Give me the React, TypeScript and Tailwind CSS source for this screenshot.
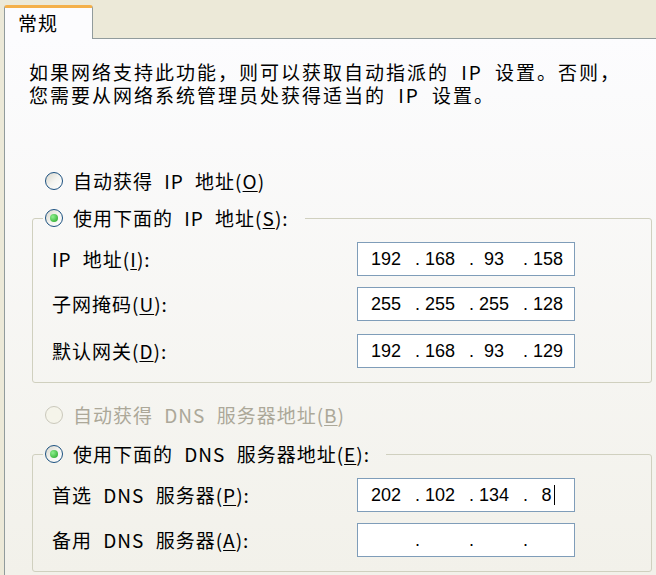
import React from 'react';

const cjk = "font-['Noto_Sans_CJK_SC',sans-serif]";

function Radio({ checked, disabled }: { checked?: boolean; disabled?: boolean }) {
  return (
    <span
      className={`flex h-[18px] w-[18px] shrink-0 items-center justify-center rounded-full border ${
        disabled
          ? 'border-[#cac8bb] bg-[#f5f4ea]'
          : 'border-[#1c5180] bg-gradient-to-br from-[#d8d6cc] via-[#f4f4f0] to-white'
      }`}
    >
      {checked && (
        <span className="h-[8px] w-[8px] rounded-full bg-[radial-gradient(circle_at_35%_35%,#8ef08e,#21a121)]" />
      )}
    </span>
  );
}

function Key({ k }: { k: string }) {
  return (
    <>
      (<span className="underline underline-offset-2">{k}</span>)
    </>
  );
}

function IpBox({ parts, caret }: { parts: string[]; caret?: boolean }) {
  return (
    <div className="flex h-[34px] w-[218px] items-center border border-[#7f9db9] bg-white pl-[1px] font-['Liberation_Sans',sans-serif] text-[18px] tracking-normal text-black">
      {parts.map((p, i) => (
        <div key={i} className="flex w-[54px] items-center">
          <span className="w-[10px] pl-[2px]">{i > 0 ? '.' : ''}</span>
          <span className="flex w-[34px] items-center justify-center">
            {p}
            {caret && i === parts.length - 1 && (
              <span className="ml-[2px] inline-block h-[20px] w-px bg-black" />
            )}
          </span>
          <span className="w-[10px]" />
        </div>
      ))}
    </div>
  );
}

function Row({ label, parts, caret }: { label: React.ReactNode; parts: string[]; caret?: boolean }) {
  return (
    <div className="flex items-center">
      <span className="w-[305px]">{label}</span>
      <IpBox parts={parts} caret={caret} />
    </div>
  );
}

export default function App() {
  return (
    <div
      className={`h-[575px] w-[656px] overflow-hidden bg-[#ece9d8] text-[19px] tracking-[1px] text-black [word-spacing:6px] ${cjk}`}
    >
      {/* tab strip */}
      <div className="h-[38px] pl-[4px] pt-[5px]">
        <div className="relative z-10 flex h-[34px] w-[89px] items-center rounded-t-[3px] border-x border-t-[3px] border-x-[#919b9c] border-t-[#f4b04a] bg-[#fcfcfe] pb-[3px] pl-[13px] leading-none">
          常规
        </div>
      </div>

      {/* tab panel */}
      <div className="ml-[4px] h-[537px] border-l border-t border-[#919b9c] bg-gradient-to-b from-[#fcfcfe] to-[#f2f1ea]">
        <p className="ml-[24px] mt-[21px] leading-[23px] tracking-[2px]">
          如果网络支持此功能，则可以获取自动指派的 IP 设置。否则，
          <br />
          您需要从网络系统管理员处获得适当的 IP 设置。
        </p>

        <div className="ml-[40px] mt-[63px] flex h-[24px] items-center gap-[10px]">
          <Radio />
          <span>
            自动获得 IP 地址<Key k="O" />
          </span>
        </div>

        <fieldset className="ml-[27px] mt-[13px] w-[620px] rounded-[3px] border border-[#d0d0bf] pb-[14px]">
          <legend className="ml-[10px] px-[2px]">
            <span className="flex h-[24px] items-center gap-[10px] pr-[14px]">
              <Radio checked />
              <span>
                使用下面的 IP 地址<Key k="S" />:
              </span>
            </span>
          </legend>
          <div className="mt-[12px] flex flex-col pl-[19px]">
            <Row label={<>IP 地址<Key k="I" />:</>} parts={['192', '168', '93', '158']} />
            <div className="mt-[11px]">
              <Row label={<>子网掩码<Key k="U" />:</>} parts={['255', '255', '255', '128']} />
            </div>
            <div className="mt-[13px]">
              <Row label={<>默认网关<Key k="D" />:</>} parts={['192', '168', '93', '129']} />
            </div>
          </div>
        </fieldset>

        <div className="ml-[40px] mt-[20px] flex h-[24px] items-center gap-[10px] text-[#aca899]">
          <Radio disabled />
          <span>
            自动获得 DNS 服务器地址<Key k="B" />
          </span>
        </div>

        <fieldset className="ml-[27px] mt-[15px] w-[620px] rounded-[3px] border border-[#d0d0bf] pb-[14px]">
          <legend className="ml-[10px] px-[2px]">
            <span className="flex h-[24px] items-center gap-[10px] pr-[14px]">
              <Radio checked />
              <span>
                使用下面的 DNS 服务器地址<Key k="E" />:
              </span>
            </span>
          </legend>
          <div className="mt-[12px] flex flex-col pl-[19px]">
            <Row label={<>首选 DNS 服务器<Key k="P" />:</>} parts={['202', '102', '134', '8']} caret />
            <div className="mt-[11px]">
              <Row label={<>备用 DNS 服务器<Key k="A" />:</>} parts={['', '', '', '']} />
            </div>
          </div>
        </fieldset>
      </div>
    </div>
  );
}
